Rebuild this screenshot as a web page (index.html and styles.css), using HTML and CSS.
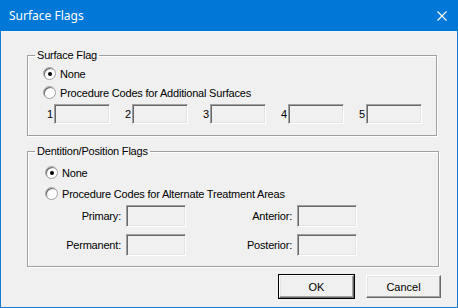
FILE: index.html
```html
<!DOCTYPE html>
<html lang="en">
<head>
  <meta charset="UTF-8" />
  <title>Surface Flags</title>
  <link rel="stylesheet" href="styles.css">
</head>
<body>
  <div class="window">
    <div class="titlebar">
      <span class="title">Surface Flags</span>
      <svg class="close" width="10" height="10" viewBox="0 0 10 10">
        <path d="M0.5 0.5 L9.5 9.5 M9.5 0.5 L0.5 9.5" stroke="#fff" stroke-width="1.1" />
      </svg>
    </div>

    <div class="content">
      <!-- Surface flag group -->
      <fieldset class="group surface">
        <legend>Surface Flag</legend>
        <label class="radio-row"><span class="radio checked"></span>None</label>
        <label class="radio-row"><span class="radio"></span>Procedure Codes for Additional Surfaces</label>
        <div class="surface-boxes">
          <div class="cell"><span class="num">1</span><span class="field"></span></div>
          <div class="cell"><span class="num">2</span><span class="field"></span></div>
          <div class="cell"><span class="num">3</span><span class="field"></span></div>
          <div class="cell"><span class="num">4</span><span class="field"></span></div>
          <div class="cell"><span class="num">5</span><span class="field"></span></div>
        </div>
      </fieldset>

      <!-- Dentition / position group -->
      <fieldset class="group dentition">
        <legend>Dentition/Position Flags</legend>
        <label class="radio-row"><span class="radio checked"></span>None</label>
        <label class="radio-row"><span class="radio"></span>Procedure Codes for Alternate Treatment Areas</label>
        <div class="area-grid">
          <span class="lbl">Primary:</span><span class="field"></span>
          <span class="lbl">Anterior:</span><span class="field"></span>
          <span class="lbl">Permanent:</span><span class="field"></span>
          <span class="lbl">Posterior:</span><span class="field"></span>
        </div>
      </fieldset>

      <div class="actions">
        <button class="btn default">OK</button>
        <button class="btn">Cancel</button>
      </div>
    </div>
  </div>
</body>
</html>
```

FILE: styles.css
```css
body {
  margin: 0;
  font-family: "Liberation Sans", Arial, sans-serif;
  font-size: 11px;
  letter-spacing: -0.2px;
  color: #000;
  background: #f0f0f0;
}

.window {
  width: 458px;
  height: 308px;
  box-sizing: border-box;
  border: 1px solid #1979d2;
  border-top: none;
  background: #f0f0f0;
}

.titlebar {
  height: 31px;
  margin: 0 -1px;
  background: #0078d7;
  display: flex;
  align-items: center;
  justify-content: space-between;
  padding: 0 10px 0 9px;
}

.title {
  font-family: "Noto Sans", "Open Sans", sans-serif;
  font-size: 12px;
  letter-spacing: 0;
  color: #fff;
  margin-top: -1px;
}

.close {
  display: block;
  margin-right: 1px;
}

.content {
  padding: 18px 0 0 26px;
}

.group {
  margin: 0;
  padding: 0;
  border: 1px solid #a0a0a0;
  box-shadow: 1px 1px 0 #fff, inset 1px 1px 0 #fff;
  min-width: 0;
}

.group legend {
  margin-left: 7px;
  padding: 0 2px;
  line-height: 13px;
}

.surface {
  width: 410px;
  box-sizing: border-box;
  padding: 2px 0 11px 0;
}

.dentition {
  width: 412px;
  box-sizing: border-box;
  margin-top: 9px;
  padding: 5px 0 10px 0;
}

.radio-row {
  display: flex;
  align-items: center;
  height: 19px;
  padding-left: 15px;
}

.dentition .radio-row {
  padding-left: 17px;
}

.dentition .radio-row + .radio-row {
  margin-top: 2px;
}

.radio {
  width: 13px;
  height: 13px;
  box-sizing: border-box;
  border-radius: 50%;
  border: 1px solid #a0a0a0;
  background: #fff;
  box-shadow: inset 1px 1px 0 #696969;
  margin-right: 4px;
  display: flex;
  align-items: center;
  justify-content: center;
}

.radio.checked::after {
  content: "";
  width: 4px;
  height: 4px;
  border-radius: 50%;
  background: #000;
}

.field {
  display: block;
  box-sizing: border-box;
  background: #f0f0f0;
  border: 1px solid;
  border-color: #a0a0a0 #fff #fff #a0a0a0;
  box-shadow: inset 1px 1px 0 #696969, inset -1px -1px 0 #e3e3e3;
}

.surface-boxes {
  display: grid;
  grid-template-columns: repeat(5, 78px);
  margin-top: 2px;
  padding-left: 16px;
}

.cell {
  display: flex;
  align-items: center;
}

.num {
  width: 10px;
  text-align: right;
  padding-right: 1px;
  box-sizing: border-box;
}

.surface-boxes .field {
  width: 56px;
  height: 20px;
}

.area-grid {
  display: grid;
  grid-template-columns: 98px 60px 111px 60px;
  grid-auto-rows: 22px;
  row-gap: 7px;
  align-items: center;
  margin-top: 2px;
}

.lbl {
  text-align: right;
  padding-right: 5px;
}

.area-grid .field {
  height: 22px;
}

.actions {
  display: flex;
  justify-content: flex-end;
  gap: 12px;
  margin-top: 8px;
  padding-right: 16px;
}

.btn {
  width: 75px;
  height: 23px;
  font-family: inherit;
  font-size: 11px;
  letter-spacing: 0;
  background: #f0f0f0;
  border: 1px solid;
  border-color: #fff #696969 #696969 #fff;
  box-shadow: inset -1px -1px 0 #a0a0a0, inset 1px 1px 0 #e3e3e3;
  padding: 0;
  color: #000;
}

.btn.default {
  outline: 1px solid #000;
  outline-offset: 0;
}
```
